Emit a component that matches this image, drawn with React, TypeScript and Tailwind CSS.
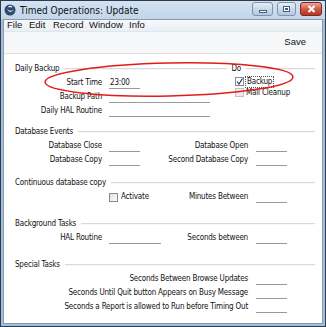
import React from "react";

const F = { fontFamily: '"Liberation Sans", Arial, sans-serif' };
const N = { fontFamily: '"DejaVu Sans", sans-serif', fontStretch: "condensed" as const, letterSpacing: "-0.2px" };

function Field({ w, value }: { w: string; value?: string }) {
  return (
    <div className={`${w} h-[12px] border-b border-[#9a9a9a] text-[8px] leading-[11px] text-[#111] pl-[1px]`}>
      {value}
    </div>
  );
}

function Line() {
  return <div className="flex-1 ml-[5px] h-[2px] border-t border-[#d9d9d9] border-b border-b-[#f7f7f7]" />;
}

function Header({ title }: { title: string }) {
  return (
    <div className="flex items-center h-[14px] pl-[11px] pr-[7px]">
      <span className="text-[8px] text-[#111] whitespace-nowrap">{title}</span>
      <Line />
    </div>
  );
}

function Row({ label, children }: { label: string; children?: React.ReactNode }) {
  return (
    <div className="flex items-center h-[14px]">
      <span className="w-[98px] text-right text-[8px] text-[#111] whitespace-nowrap">{label}</span>
      <div className="ml-[7px] flex items-center">{children}</div>
    </div>
  );
}

function Row2({ l1, f1, l2 }: { l1: string; f1: string; l2: string }) {
  return (
    <div className="flex items-center h-[14px]">
      <span className="w-[98px] text-right text-[8px] text-[#111] whitespace-nowrap">{l1}</span>
      <div className="ml-[7px]"><Field w={f1} /></div>
      <span className="flex-1" />
      <span className="text-[8px] text-[#111] whitespace-nowrap">{l2}</span>
      <div className="ml-[8px] mr-[35px]"><Field w="w-[31px]" /></div>
    </div>
  );
}

function WinBtn({ kind }: { kind: "min" | "max" | "close" }) {
  if (kind === "close") {
    return (
      <div className="w-[22px] h-[14px] rounded-[3px] border border-[#7a2a22] bg-gradient-to-b from-[#e8a597] via-[#d05a45] to-[#b9321f] flex items-center justify-center">
        <svg width="9" height="8" viewBox="0 0 9 8">
          <path d="M1.5 1 L7.5 7 M7.5 1 L1.5 7" stroke="#fff" strokeWidth="2" />
        </svg>
      </div>
    );
  }
  return (
    <div className={`${kind === "min" ? "w-[21px]" : "w-[19px]"} h-[14px] rounded-[3px] border border-[#7d93ae] bg-gradient-to-b from-[#e4eef8] via-[#c9d9ea] to-[#b3c8df] flex items-center justify-center`}>
      {kind === "min" ? (
        <div className="w-[8px] h-[3px] mt-[4px] bg-white border border-[#4a5d78]" />
      ) : (
        <div className="w-[7px] h-[6px] bg-white border border-[#4a5d78] flex items-center justify-center">
          <div className="w-[3px] h-[2px] border border-[#4a5d78]" />
        </div>
      )}
    </div>
  );
}

export default function App() {
  return (
    <div className="w-[326px] h-[327px] bg-[#2f3b4a] p-[1px] overflow-hidden" style={F}>
      <div className="w-full h-full bg-[#9fc0dc] px-[2px] pb-[2px] flex flex-col">
        {/* title bar */}
        <div className="h-[18px] -mx-[2px] px-[3px] bg-gradient-to-b from-[#d3e3f2] to-[#c2d6ea] flex items-center">
          <svg width="12" height="12" viewBox="0 0 12 12" className="mr-[4px]">
            <circle cx="6" cy="6" r="5.5" fill="#2e4a6e" />
            <path d="M3 4.2 C4.5 9, 8.5 8.5, 9.5 5.5 C8 7.5, 5 7.5, 3 4.2 Z" fill="#fff" />
            <path d="M4.5 3 C5.5 2.2, 7.2 2.3, 8 3.2" stroke="#fff" strokeWidth="1.2" fill="none" />
          </svg>
          <span className="text-[10px] text-[#111] whitespace-nowrap" style={{ fontFamily: '"DejaVu Sans", sans-serif', fontStretch: "condensed" }}>
            Timed Operations: Update
          </span>
          <div className="flex-1" />
          <div className="flex items-center gap-[4px] -mt-[2px]">
            <WinBtn kind="min" />
            <WinBtn kind="max" />
            <WinBtn kind="close" />
          </div>
        </div>
        <div className="flex-1 bg-white border border-[#8e9aa8] flex flex-col">
          {/* menu bar */}
          <div className="h-[12px] bg-gradient-to-b from-[#f7f9fc] to-[#eaeff5] flex items-center pl-[3px] text-[9.5px] text-[#111] border-b border-[#dfe5ec]">
            <span className="w-[22px]">File</span>
            <span className="w-[24px]">Edit</span>
            <span className="w-[36px]">Record</span>
            <span className="w-[40px]">Window</span>
            <span>Info</span>
          </div>
          {/* toolbar */}
          <div className="h-[22px] bg-[#f6f7f8] border-b border-[#e2e2e2] flex items-center justify-end pr-[16px]">
            <span className="text-[9.5px] text-[#111]">Save</span>
          </div>
          {/* content */}
          <div className="relative flex-1 pt-[8px]" style={N}>
            <div className="flex items-center h-[14px] pl-[11px] pr-[7px]">
              <span className="text-[8px] text-[#111] whitespace-nowrap">Daily Backup</span>
              <div className="flex-1 ml-[5px] mr-[4px] h-[2px] border-t border-[#d9d9d9] border-b border-b-[#f7f7f7]" />
              <span className="text-[8px] text-[#111]">Do</span>
              <div className="w-[69px] ml-[5px] h-[2px] border-t border-[#d9d9d9] border-b border-b-[#f7f7f7]" />
            </div>
            <div className="flex">
              <div className="w-[231px]">
                <Row label="Start Time"><Field w="w-[31px]" value="23:00" /></Row>
                <Row label="Backup Path"><Field w="w-[101px]" /></Row>
                <Row label="Daily HAL Routine"><Field w="w-[101px]" /></Row>
              </div>
              <div className="flex flex-col">
                <div className="flex items-center h-[11px]">
                  <div className="w-[9px] h-[9px] border border-[#8b8b8b] bg-white flex items-center justify-center">
                    <svg width="7" height="7" viewBox="0 0 7 7"><path d="M1 3.5 L3 6 L6.5 0.5" stroke="#1c3c78" strokeWidth="1.2" fill="none" /></svg>
                  </div>
                  <span className="ml-[1px] px-[1px] text-[8px] leading-[10px] text-[#111] border border-dotted border-[#555]">Backup</span>
                </div>
                <div className="flex items-center h-[11px]">
                  <div className="w-[9px] h-[9px] border border-[#c3c3c3] bg-[#ececec]" />
                  <span className="ml-[2px] text-[8px] text-[#111]">Mail Cleanup</span>
                </div>
              </div>
            </div>

            <div className="h-[7px]" />
            <Header title="Database Events" />
            <Row2 l1="Database Close" f1="w-[31px]" l2="Database Open" />
            <Row2 l1="Database Copy" f1="w-[31px]" l2="Second Database Copy" />

            <div className="h-[9px]" />
            <Header title="Continuous database copy" />
            <div className="flex items-center h-[14px]">
              <div className="ml-[105px] w-[9px] h-[9px] border border-[#8b8b8b] bg-gradient-to-br from-[#e4e4e4] to-[#fafafa]" />
              <span className="ml-[3px] text-[8px] text-[#111]">Activate</span>
              <span className="flex-1" />
              <span className="text-[8px] text-[#111] whitespace-nowrap">Minutes Between</span>
              <div className="ml-[8px] mr-[35px]"><Field w="w-[31px]" /></div>
            </div>

            <div className="h-[13px]" />
            <Header title="Background Tasks" />
            <Row2 l1="HAL Routine" f1="w-[52px]" l2="Seconds between" />

            <div className="h-[13px]" />
            <Header title="Special Tasks" />
            {[
              "Seconds Between Browse Updates",
              "Seconds Until Quit button Appears on Busy Message",
              "Seconds a Report is allowed to Run before Timing Out",
            ].map((t) => (
              <div key={t} className="flex items-center justify-end h-[14px]">
                <span className="text-[8px] text-[#111] whitespace-nowrap">{t}</span>
                <div className="ml-[8px] mr-[35px]"><Field w="w-[31px]" /></div>
              </div>
            ))}

            {/* red annotation ellipse */}
            <svg className="absolute left-0 top-0 pointer-events-none" width="320" height="60" viewBox="0 0 320 60">
              <ellipse cx="165" cy="25.5" rx="124" ry="16.5" transform="rotate(-1.2 165 25.5)" fill="none" stroke="#e41b1b" strokeWidth="1.5" />
            </svg>
          </div>
        </div>
      </div>
    </div>
  );
}
